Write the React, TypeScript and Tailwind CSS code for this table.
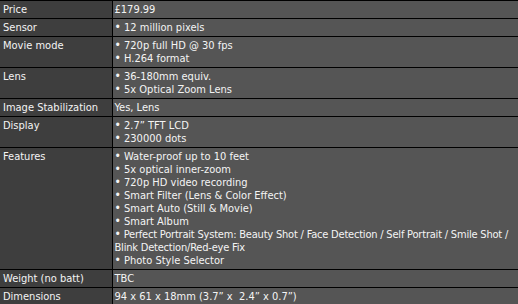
import React from 'react';

type Spec = {
  label: string;
  value: string | string[];
};

const specs: Spec[] = [
  { label: 'Price', value: '£179.99' },
  { label: 'Sensor', value: ['12 million pixels'] },
  { label: 'Movie mode', value: ['720p full HD @ 30 fps', 'H.264 format'] },
  { label: 'Lens', value: ['36-180mm equiv.', '5x Optical Zoom Lens'] },
  { label: 'Image Stabilization', value: 'Yes, Lens' },
  { label: 'Display', value: ['2.7” TFT LCD', '230000 dots'] },
  {
    label: 'Features',
    value: [
      'Water-proof up to 10 feet',
      '5x optical inner-zoom',
      '720p HD video recording',
      'Smart Filter (Lens & Color Effect)',
      'Smart Auto (Still & Movie)',
      'Smart Album',
      'Perfect Portrait System: Beauty Shot / Face Detection / Self Portrait / Smile Shot /\nBlink Detection/Red-eye Fix',
      'Photo Style Selector',
    ],
  },
  { label: 'Weight (no batt)', value: 'TBC' },
  { label: 'Dimensions', value: '94 x 61 x 18mm (3.7” x\u00a0 2.4” x 0.7”)' },
];

function SpecValue({ value }: { value: string | string[] }) {
  if (typeof value === 'string') return <>{value}</>;
  return (
    <>
      {value.map((item, i) => (
        // the long portrait line wraps by hand, squeezed a touch to fit
        <div
          key={i}
          className={item.includes('\n') ? 'whitespace-pre tracking-[-0.2px]' : 'whitespace-pre'}
        >
          <span className="text-[12px]">•</span> {item}
        </div>
      ))}
    </>
  );
}

export default function App() {
  return (
    <div className="w-[518px] h-[304px] overflow-hidden bg-[#555555]">
      <table className="table-fixed w-[518px] border-collapse border-t border-black text-[11px] leading-[13px] text-[#f4f4f4] font-['DejaVu_Sans_Condensed','DejaVu_Sans',sans-serif]">
        <colgroup>
          <col className="w-[112px]" />
          <col />
        </colgroup>
        <tbody>
          {specs.map((row) => (
            <tr key={row.label} className="border-b border-black">
              <td className="align-top bg-[#3e3e3e] border-r border-black px-[3px] py-[2px] whitespace-nowrap">
                {row.label}
              </td>
              <td className="align-top bg-[#555555] pl-[2px] pr-0 py-[2px] overflow-hidden">
                <SpecValue value={row.value} />
              </td>
            </tr>
          ))}
        </tbody>
      </table>
    </div>
  );
}
